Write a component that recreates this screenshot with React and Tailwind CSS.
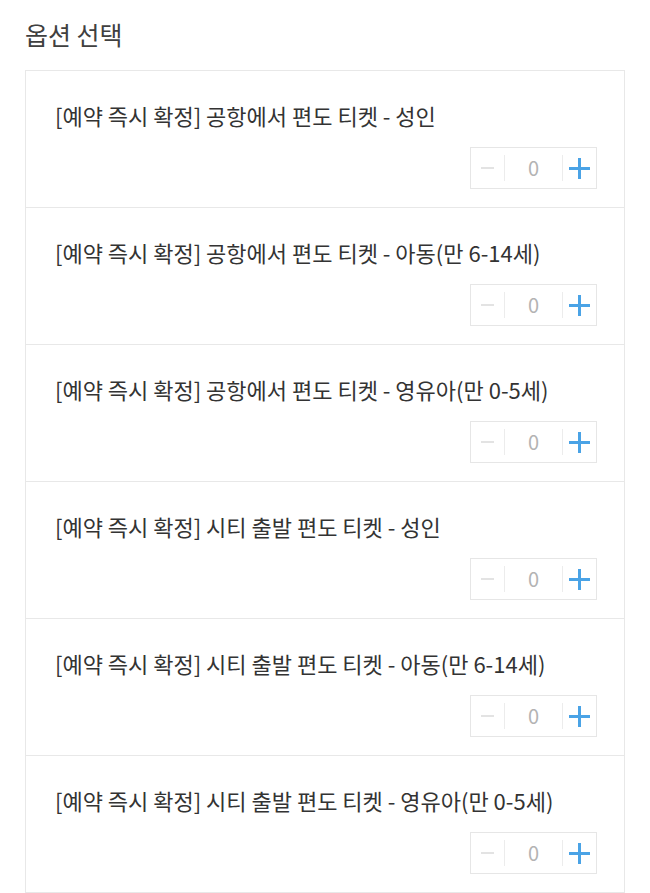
import React, { useState } from 'react';

const options = [
  '[예약 즉시 확정] 공항에서 편도 티켓 - 성인',
  '[예약 즉시 확정] 공항에서 편도 티켓 - 아동(만 6-14세)',
  '[예약 즉시 확정] 공항에서 편도 티켓 - 영유아(만 0-5세)',
  '[예약 즉시 확정] 시티 출발 편도 티켓 - 성인',
  '[예약 즉시 확정] 시티 출발 편도 티켓 - 아동(만 6-14세)',
  '[예약 즉시 확정] 시티 출발 편도 티켓 - 영유아(만 0-5세)',
];

const Stepper = ({ value, onChange }) => (
  <div className="flex h-[42px] w-[127px] items-center border border-[#e6e6e6] bg-white">
    <button
      onClick={() => onChange(Math.max(0, value - 1))}
      className="flex h-full w-[33px] items-center justify-center"
      aria-label="minus"
    >
      <span className="block h-[2px] w-[13px] bg-[#e3e3e3]"></span>
    </button>
    <span className="h-[26px] w-px bg-[#ececec]"></span>
    <span className="flex-1 text-center text-[20px] text-[#b3b3b3]">{value}</span>
    <span className="h-[26px] w-px bg-[#ececec]"></span>
    <button
      onClick={() => onChange(value + 1)}
      className="relative flex h-full w-[33px] items-center justify-center"
      aria-label="plus"
    >
      <span className="absolute h-[3px] w-[21px] bg-[#4aa3e6]"></span>
      <span className="absolute h-[21px] w-[3px] bg-[#4aa3e6]"></span>
    </button>
  </div>
);

const App = () => {
  const [counts, setCounts] = useState(options.map(() => 0));

  return (
    <div
      className="min-h-screen bg-white px-[25px] pt-[18px]"
      style={{ fontFamily: '"Noto Sans CJK KR", "Noto Sans", sans-serif' }}
    >
      <h2 className="text-[25px] leading-[32px] font-normal text-[#404040]">옵션 선택</h2>
      <div className="mt-[20px] border-x border-t border-[#e8e8e8]">
        {options.map((label, index) => (
          <div key={index} className="border-b border-[#e8e8e8] pl-[29px] pr-[27px] pt-[29px] pb-[18px]">
            <p className="text-[22px] leading-[30px] text-[#333]">{label}</p>
            <div className="mt-[17px] flex justify-end">
              <Stepper
                value={counts[index]}
                onChange={(v) => setCounts((prev) => prev.map((c, i) => (i === index ? v : c)))}
              />
            </div>
          </div>
        ))}
      </div>
    </div>
  );
};

export default App;
